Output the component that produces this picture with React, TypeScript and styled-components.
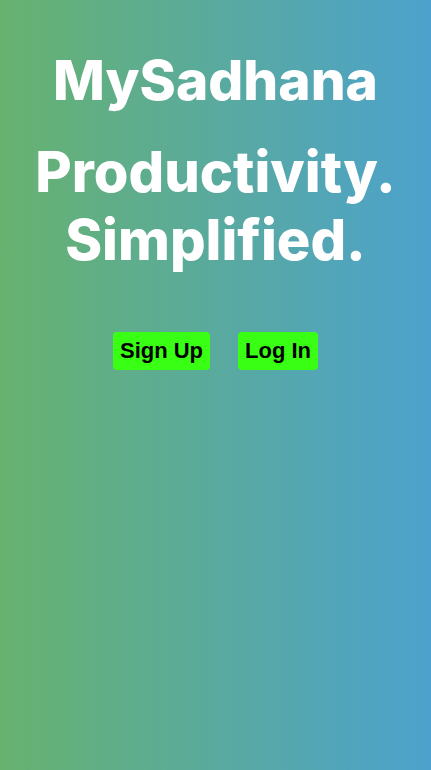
import React from "react";
import styled, { createGlobalStyle } from "styled-components";

const GlobalStyle = createGlobalStyle`
  html, body {
    margin: 0;
    padding: 0;
    height: 100%;
  }
  #root {
    min-height: 100%;
  }
`;

const Page = styled.div`
  min-height: 100vh;
  box-sizing: border-box;
  background: linear-gradient(to right, #67b26f, #4ca2cd);
  display: flex;
  flex-direction: column;
  align-items: center;
  padding-top: 46px;
  font-family: Inter, "Open Sans", sans-serif;
  color: #ffffff;
`;

const Brand = styled.h1`
  margin: 0;
  font-size: 55px;
  font-weight: 800;
  line-height: 68px;
  text-align: center;
`;

const Tagline = styled.h2`
  margin: 24px 0 0;
  font-size: 56px;
  font-weight: 800;
  line-height: 68px;
  text-align: center;
`;

const Actions = styled.div`
  display: flex;
  gap: 28px;
  margin-top: 58px;
`;

const ActionButton = styled.button`
  font-family: "Liberation Sans", Arial, sans-serif;
  font-weight: 700;
  font-size: 22px;
  color: #000000;
  background-color: #39ff14;
  border: none;
  border-radius: 4px;
  height: 38px;
  padding: 0 7px;
  cursor: pointer;
`;

export default function App() {
  return (
    <>
      <GlobalStyle />
      <Page>
        <Brand>MySadhana</Brand>
        <Tagline>
          Productivity.
          <br />
          Simplified.
        </Tagline>
        <Actions>
          <ActionButton>Sign Up</ActionButton>
          <ActionButton>Log In</ActionButton>
        </Actions>
      </Page>
    </>
  );
}
